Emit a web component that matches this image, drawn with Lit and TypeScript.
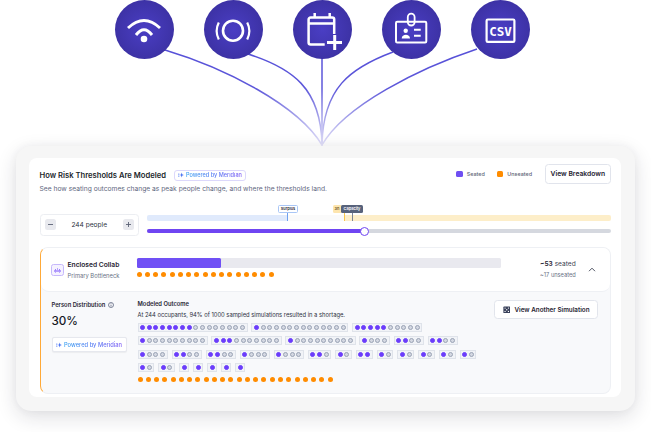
import { LitElement, html, css, svg } from "lit";
import { customElement } from "lit/decorators.js";

const PILLS: [number, number][] = [
  [16, 8], [14, 1], [10, 5],
  [10, 1], [10, 3], [10, 1], [4, 1], [4, 2], [4, 2],
  [4, 1], [4, 2], [4, 2], [4, 1], [4, 1], [3, 2], [2, 1], [2, 2], [2, 1], [2, 1], [2, 1], [2, 1], [2, 1],
  [2, 1], [2, 1], [1, 1], [1, 1], [1, 1], [1, 1], [1, 1],
];

const CURVES = [
  "M165 50 C 225 68, 298 105, 322 145",
  "M248 54 C 292 68, 321 88, 322 145",
  "M322 58 L322.01 146",
  "M393 52 C 350 68, 323 88, 322 145",
  "M477 49 C 420 68, 345 105, 322 145",
];

const ICONS = [
  svg`<path d="M1 15Q17 0 33 15" stroke-width="2.9"/><path d="M9 22Q17 11.5 25 22" stroke-width="2.9"/><circle cx="17" cy="26" r="3.3" fill="#fff" stroke="none"/>`,
  svg`<circle cx="17" cy="17.7" r="10" stroke-width="2.6"/><path d="M2.8 9.4Q-1.5 17.7 2.8 26.5" stroke-width="2.2"/><path d="M31.2 9.4Q35.5 17.7 31.2 26.5" stroke-width="2.2"/>`,
  svg`<path d="M19.7 31.5H5.6a2 2 0 0 1-2-2V6.6a2 2 0 0 1 2-2H27.2a2 2 0 0 1 2 2V21" stroke-width="2.5"/><path d="M3.6 10.4H29.2M9.7 0V5M24.7 0V5" stroke-width="2.5"/><path d="M22 29.4H37M29.7 22V37" stroke-width="3"/>`,
  svg`<rect x="2" y="8.7" width="30.3" height="20.7" rx="1.2" stroke-width="2"/><rect x="13.8" y="0.7" width="6.8" height="11.8" rx="3.4" fill="#3f35ad" stroke-width="1.8"/><circle cx="11.7" cy="17.7" r="2.2" fill="#fff" stroke="none"/><path d="M7.7 25.4c0-5 8.3-5 8.3 0z" fill="#fff" stroke="none"/><path d="M20 16.7H26.7M20 22.7H26.7" stroke-width="2"/>`,
  svg`<rect x="3.6" y="6.5" width="27.8" height="22.4" rx="1.2" stroke-width="2.2"/><text x="17.5" y="22.5" text-anchor="middle" class="csv">CSV</text>`,
];

const spark = html`<svg class="spark" viewBox="0 0 10 10"><path d="M6.2 1 7.2 4 10 5 7.2 6 6.2 9 5.2 6 2.8 5 5.2 4z" fill="#3f6bf2"/><circle cx="1.4" cy="3.4" r="1" fill="#3f6bf2"/><circle cx="1.4" cy="6.8" r="1" fill="#3f6bf2"/></svg>`;

@customElement("app-root")
export class AppRoot extends LitElement {
  static styles = css`
    :host {
      display: block;
      position: relative;
      width: 651px;
      height: 432px;
      overflow: hidden;
      background: #fff;
      font-family: Inter, "Liberation Sans", sans-serif;
      color: #1d2230;
    }
    * { box-sizing: border-box; }
    .wires { position: absolute; inset: 0; width: 651px; height: 160px; }
    .wires path { fill: none; stroke: url(#fade); stroke-width: 1.5; }
    .sources {
      position: relative;
      height: 146px;
      display: flex;
      justify-content: flex-start;
      gap: 30px;
      padding-left: 114.8px;
    }
    .source {
      width: 59px;
      height: 59px;
      border-radius: 50%;
      background: radial-gradient(circle at center, #4a3ec4 0%, #3e33a8 65%, #352b96 100%);
      display: flex;
      align-items: center;
      justify-content: center;
    }
    .source svg { width: 34px; height: 34px; overflow: visible; }
    .source svg * { stroke: #fff; fill: none; }
    .source svg circle[stroke="none"], .source svg path[stroke="none"] { stroke: none; fill: #fff; }
    .source svg .csv {
      font: 700 12.5px "DejaVu Sans Mono", monospace;
      fill: #fff;
      stroke: none;
    }
    .frame {
      position: relative;
      margin: 0 0 0 15.5px;
      width: 619.5px;
      height: 265px;
      padding: 12px 14px 14px 13.5px;
      background: #f6f6f6;
      border-radius: 15px;
      box-shadow: 0 6px 20px rgba(30, 30, 50, 0.14), 0 0 10px rgba(30, 30, 50, 0.04);
    }
    .sheet {
      height: 239px;
      background: #fff;
      border-radius: 8px;
      padding: 6px 10px 0 10.5px;
    }
    .head { display: flex; align-items: flex-start; height: 42px; }
    .head-main { flex: 1; padding-top: 6px; }
    .title-row { display: flex; align-items: center; gap: 8px; height: 10.5px; }
    h1 { margin: 0; font-size: 7.63px; font-weight: 600; color: #1b1f2b; white-space: nowrap; }
    .sub { margin: 4.5px 0 0; font-size: 6.7px; color: #5f6880; white-space: nowrap; }
    .ai {
      display: inline-flex;
      align-items: center;
      justify-content: center;
      gap: 2px;
      height: 10.5px;
      width: 72px;
      border: 0.75px solid #dcd8fb;
      border-radius: 3px;
      font-size: 5.55px;
      font-weight: 500;
      white-space: nowrap;
    }
    .ai-text {
      background: linear-gradient(90deg, #2f9bf0, #7a58f5);
      -webkit-background-clip: text;
      background-clip: text;
      color: transparent;
    }
    .spark { width: 6px; height: 6px; flex: none; }
    .legend { display: flex; align-items: center; height: 19.5px; font-size: 5.4px; color: #5b6275; font-weight: 500; }
    .sw { width: 6.5px; height: 6.5px; border-radius: 1.5px; margin-right: 4px; }
    .sw.p { background: #6f4ff2; }
    .sw.o { background: #ff8c00; }
    .legend span + .sw { margin-left: 12px; }
    .btn {
      display: flex;
      align-items: center;
      justify-content: center;
      height: 19.5px;
      width: 66.5px;
      margin-left: 12.5px;
      border: 0.75px solid #e1e4ec;
      border-radius: 3.5px;
      font-size: 6.75px;
      font-weight: 600;
      color: #1d2230;
      background: #fff;
      white-space: nowrap;
    }
    .controls { display: flex; gap: 8px; height: 35px; }
    .stepper {
      margin-top: 7.5px;
      width: 99.5px;
      height: 22px;
      border: 0.75px solid #eceef2;
      border-radius: 3.5px;
      display: flex;
      align-items: center;
      justify-content: space-between;
      padding: 0 4px;
      font-size: 6.6px;
      color: #2b3040;
    }
    .step { width: 11px; height: 11px; background: #e8e9ee; border-radius: 2.5px; }
    .step svg { display: block; width: 11px; height: 11px; }
    .slider { flex: 1; position: relative; }
    .band { position: absolute; top: 9px; left: 0; right: 0; height: 5.5px; border-radius: 2px; display: flex; overflow: hidden; background: #fafafa; }
    .band i { display: block; height: 100%; }
    .band .b { width: 140px; background: #e0eafc; }
    .band .n { width: 57.5px; }
    .band .y { flex: 1; background: #fdeec9; }
    .flag {
      position: absolute;
      top: -1.5px;
      height: 8px;
      border-radius: 1.5px;
      font-size: 3.9px;
      font-weight: 600;
      display: flex;
      align-items: center;
      justify-content: center;
      white-space: nowrap;
      overflow: hidden;
    }
    .flag.s { left: 131px; width: 20px; background: #fff; border: 0.75px solid #a9c6f6; color: #1f2432; }
    .flag.t { left: 186px; width: 9px; background: #fde5ae; color: #6b5a25; justify-content: flex-start; padding-left: 1.5px; }
    .flag.c { left: 194px; width: 22px; background: #57627b; color: #fff; }
    .tick { position: absolute; top: 6px; width: 0.9px; height: 8.5px; }
    .tick.s { left: 140px; background: #6ea0ef; }
    .tick.t { left: 197.3px; background: #f8c74e; }
    .tick.c { left: 204.5px; background: #7b8496; }
    .rail { position: absolute; top: 23px; left: 0; right: 0; height: 4px; border-radius: 2px; background: #d5d8df; }
    .rail i { display: block; width: 217px; height: 100%; border-radius: 2px; background: #6f45f2; }
    .knob {
      position: absolute;
      top: -2.5px;
      left: 212.8px;
      width: 9px;
      height: 9px;
      border-radius: 50%;
      background: #fff;
      border: 1px solid #6f45f2;
    }
    .zone {
      margin-top: 6px;
      height: 147px;
      border: 0.75px solid #eef0f4;
      border-left: 1.5px solid #ffa938;
      border-radius: 8px;
      overflow: hidden;
      background: #f8f9fb;
    }
    .zone-top {
      height: 44px;
      background: #fff;
      border-bottom: 0.75px solid #eef0f4;
      border-radius: 0 0 8px 8px;
      display: flex;
      align-items: center;
      padding-left: 10.5px;
    }
    .room { width: 12.5px; height: 12.5px; border: 0.75px solid #c6b8fb; border-radius: 2.5px; background: #f5f2ff; display: flex; align-items: center; justify-content: center; margin-top: 0.5px; }
    .room svg { width: 9px; height: 9px; }
    .names { width: 73px; padding-left: 4px; margin-top: 1px; }
    .names b { display: block; font-size: 6.7px; font-weight: 600; color: #1f2432; white-space: nowrap; }
    .names span { display: block; margin-top: 2.2px; font-size: 5.8px; color: #6a7285; white-space: nowrap; }
    .meter { width: 364px; margin-top: -3.5px; }
    .meter-track { height: 9.5px; border-radius: 1.5px; background: #e9e9ef; }
    .meter-track i { display: block; height: 100%; width: 84px; border-radius: 1.5px; background: #7050f5; }
    .drops { display: flex; gap: 3.28px; margin-top: 4.5px; }
    .drop { width: 5px; height: 5px; border-radius: 50%; background: #ff8c00; flex: none; }
    .tally { margin-left: 39.5px; width: 37px; white-space: nowrap; margin-top: -1px; }
    .tally div { font-size: 6.6px; color: #3a4050; }
    .tally b { font-weight: 600; color: #1f2432; }
    .tally small { display: block; margin-top: 3.5px; font-size: 5.7px; color: #6a7285; }
    .chev { width: 8px; height: 5px; margin-left: 11px; fill: none; stroke: #3a4050; stroke-width: 0.9; margin-top: -1px; }
    .zone-body { display: flex; padding: 8px 11px 0 11px; height: 103px; }
    .dist { width: 86px; }
    .label { display: flex; align-items: center; gap: 3px; font-size: 5.8px; font-weight: 600; color: #1f2432; white-space: nowrap; height: 7px; margin-top: 1px; }
    .info { width: 6px; height: 6px; fill: none; stroke: #5f6880; stroke-width: 0.8; }
    .pct { font-size: 11.7px; font-weight: 500; color: #14171f; margin-top: 6px; line-height: 14px; }
    .ai-btn { display: flex; align-items: center; justify-content: center; gap: 2px; width: 75px; height: 15px; margin-top: 9px; background: #fff; border: 0.75px solid #e6e8ee; border-radius: 2px; font-size: 5.75px; font-weight: 500; white-space: nowrap; box-shadow: 0 0.5px 1px rgba(0,0,0,0.05); }
    .model { width: 356.5px; }
    .model .label { margin-top: 0; }
    .model p { margin: 4.3px 0 4.5px; font-size: 5.8px; color: #2b3040; white-space: nowrap; line-height: 7px; }
    .pills { display: flex; flex-wrap: wrap; gap: 4.4px 3.9px; width: 340px; }
    .pill { display: flex; align-items: center; gap: 1.67px; height: 9px; padding: 0 1.6px; background: #f1f3f7; border: 0.75px solid #dfe3ea; }
    .dot { width: 5px; height: 5px; border-radius: 50%; flex: none; background: #d4d8e2; border: 1.3px solid #9aa3b5; }
    .dot.on { background: #6b3dfb; border-color: #6b3dfb; }
    .drops.low { margin-top: 4.6px; }
    .sim { display: flex; align-items: center; gap: 4.5px; justify-content: center; width: 104px; height: 19px; background: #fff; border: 0.75px solid #e2e5ec; border-radius: 3.5px; font-size: 6.3px; font-weight: 600; color: #1f2432; white-space: nowrap; flex: none; }
    .sim svg { width: 7.5px; height: 7.5px; }
  `;

  render() {
    const drops = (n: number) => html`${Array.from({ length: n }, () => html`<span class="drop"></span>`)}`;
    return html`
      <svg class="wires" viewBox="0 0 651 160">
        <defs>
          <linearGradient id="fade" gradientUnits="userSpaceOnUse" x1="0" y1="50" x2="0" y2="146">
            <stop offset="0" stop-color="#5650d8" />
            <stop offset="0.4" stop-color="#5e58da" />
            <stop offset="0.7" stop-color="#a5a2ea" />
            <stop offset="1" stop-color="#e6e4fa" />
          </linearGradient>
        </defs>
        ${CURVES.map((d) => svg`<path d=${d}></path>`)}
      </svg>
      <div class="sources">
        ${ICONS.map((i) => html`<div class="source"><svg viewBox="0 0 34 34">${i}</svg></div>`)}
      </div>
      <div class="frame">
        <div class="sheet">
          <div class="head">
            <div class="head-main">
              <div class="title-row">
                <h1>How Risk Thresholds Are Modeled</h1>
                <span class="ai">${spark}<span class="ai-text">Powered by Meridian</span></span>
              </div>
              <p class="sub">See how seating outcomes change as peak people change, and where the thresholds land.</p>
            </div>
            <div class="legend">
              <i class="sw p"></i><span>Seated</span>
              <i class="sw o"></i><span>Unseated</span>
            </div>
            <div class="btn">View Breakdown</div>
          </div>
          <div class="controls">
            <div class="stepper">
              <div class="step"><svg viewBox="0 0 11 11"><path d="M3 5.5H8" stroke="#5b6275" stroke-width="0.9"/></svg></div>
              <span>244 people</span>
              <div class="step"><svg viewBox="0 0 11 11"><path d="M3 5.5H8M5.5 3V8" stroke="#5b6275" stroke-width="0.9"/></svg></div>
            </div>
            <div class="slider">
              <div class="band"><i class="b"></i><i class="n"></i><i class="y"></i></div>
              <span class="tick s"></span><span class="tick t"></span><span class="tick c"></span>
              <span class="flag s">Surplus</span>
              <span class="flag t">3n</span>
              <span class="flag c">Capacity</span>
              <div class="rail"><i></i><span class="knob"></span></div>
            </div>
          </div>
          <div class="zone">
            <div class="zone-top">
              <div class="room"><svg viewBox="0 0 9 9"><path d="M1 6H8M2 4.8h1M4 4h1M6 4.800h1M2.5 7.4H3M6 7.4h.5" stroke="#6b3dfb" stroke-width="0.9" fill="none"/></svg></div>
              <div class="names"><b>Enclosed Collab</b><span>Primary Bottleneck</span></div>
              <div class="meter">
                <div class="meter-track"><i></i></div>
                <div class="drops">${drops(17)}</div>
              </div>
              <div class="tally">
                <div><b>~53</b> seated</div>
                <small>~17 unseated</small>
              </div>
              <svg class="chev" viewBox="0 0 8 5"><path d="M1 4.2 4 1.2 7 4.2"/></svg>
            </div>
            <div class="zone-body">
              <div class="dist">
                <div class="label">Person Distribution
                  <svg class="info" viewBox="0 0 6 6"><circle cx="3" cy="3" r="2.5"/><path d="M3 2.7V4.5M3 1.4V2"/></svg>
                </div>
                <div class="pct">30%</div>
                <div class="ai-btn">${spark}<span class="ai-text">Powered by Meridian</span></div>
              </div>
              <div class="model">
                <div class="label">Modeled Outcome</div>
                <p>At 244 occupants, 94% of 1000 sampled simulations resulted in a shortage.</p>
                <div class="pills">
                  ${PILLS.map(([n, on]) => html`<span class="pill">${Array.from({ length: n }, (_, i) => html`<span class="dot ${i < on ? "on" : ""}"></span>`)}</span>`)}
                </div>
                <div class="drops low">${drops(24)}</div>
              </div>
              <div class="sim">
                <svg viewBox="0 0 8 8"><rect x="0.4" y="0.4" width="7.2" height="7.2" rx="0.8" fill="#39415a"/><g fill="#fff"><circle cx="2.2" cy="2.2" r=".7"/><circle cx="5.8" cy="2.2" r=".7"/><circle cx="4" cy="4" r=".7"/><circle cx="2.2" cy="5.8" r=".7"/><circle cx="5.8" cy="5.8" r=".7"/></g></svg>
                View Another Simulation
              </div>
            </div>
          </div>
        </div>
      </div>
    `;
  }
}
